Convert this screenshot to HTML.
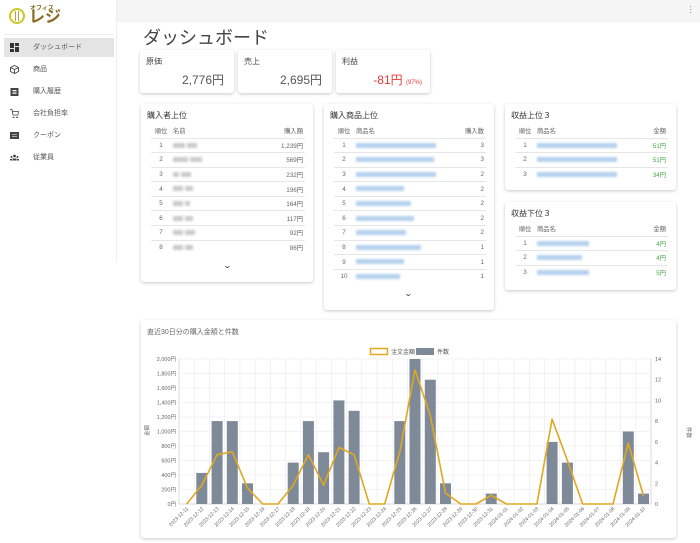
<!DOCTYPE html>
<html><head><meta charset="utf-8"><style>
*{margin:0;padding:0;box-sizing:border-box}
body{width:700px;height:543px;overflow:hidden;background:#fff;font-family:"Liberation Sans","Noto Sans CJK JP",sans-serif;color:#333;position:relative}
.top{position:absolute;left:117px;top:0;width:583px;height:22px;background:#f5f5f5}
.side{position:absolute;left:0;top:0;width:117px;height:262px;border-right:1px solid #eee;background:#fff}
.item{position:absolute;left:4px;width:110px;height:19px;font-size:7px;color:#555;line-height:19px;padding-left:29px}
.item.act{background:#e4e4e4}
.ic{position:absolute;left:6px;top:5px;width:9px;height:9px}
.card{position:absolute;background:#fff;border-radius:3px;box-shadow:0 1px 3px rgba(0,0,0,.22)}
.lab{position:absolute;left:6px;top:6px;font-size:8px;color:#444}
.val{position:absolute;right:10px;top:21px;font-size:12px;color:#555}
h1{position:absolute;left:143px;top:24px;font-size:18px;font-weight:normal;color:#444}
.tt{position:absolute;left:6px;top:6px;font-size:8px;color:#333}
table{position:absolute;border-collapse:collapse;font-size:6.3px;color:#666}
td{height:14.6px;border-top:1px solid #e6e6e6;padding:0 2px}
tr.h td{border-top:none;height:14px;color:#666}
.r{text-align:right}.c{text-align:center}
.blur{display:inline-block;height:5px;background:#ccc;filter:blur(1px);vertical-align:middle}
.bl{display:inline-block;height:5px;background:#b5d2ee;filter:blur(1px);vertical-align:middle}
.g{color:#4aa84a}
.chev{position:absolute;font-size:8px;color:#444;transform:scaleX(1.4)}
</style></head><body>
<div class="top"></div><div style="position:absolute;right:8px;top:5px;font-size:8px;color:#555;line-height:3px">·<br>·<br>·</div>
<div class="side">
 <div style="position:absolute;left:9px;top:8px;width:16px;height:16px;border-radius:50%;border:2px solid #c8c82a"></div>
 <div style="position:absolute;left:15px;top:11px;width:4px;height:10px;border-left:1.5px solid #c8a020;border-right:1.5px solid #c8a020"></div>
 <div style="position:absolute;left:30px;top:3px;font-size:6px;font-weight:bold;color:#8a6a20">オフィス</div>
 <div style="position:absolute;left:29px;top:10px;font-size:16px;font-weight:bold;color:#8a6a20;line-height:16px">レジ</div>
 <div style="position:absolute;left:4px;top:34px;width:110px;border-top:1px solid #eee"></div>
 <div class="item act" style="top:38px"><svg class="ic" viewBox="0 0 9 9"><rect x="0" y="0" width="4" height="5" fill="#333"/><rect x="5" y="0" width="4" height="3" fill="#333"/><rect x="0" y="6" width="4" height="3" fill="#333"/><rect x="5" y="4" width="4" height="5" fill="#333"/></svg>ダッシュボード</div>
 <div class="item" style="top:60px"><svg class="ic" viewBox="0 0 9 9"><path d="M4.5 .5L8.5 2.5V6.5L4.5 8.5L.5 6.5V2.5Z M.5 2.5L4.5 4.5L8.5 2.5 M4.5 4.5V8.5" fill="none" stroke="#444" stroke-width=".9"/></svg>商品</div>
 <div class="item" style="top:82px"><svg class="ic" viewBox="0 0 9 9"><rect x=".5" y="1" width="8" height="8" fill="#444"/><rect x="2.5" y="3" width="4" height="1.3" fill="#fff"/><rect x="2.5" y="5.5" width="4" height="1.3" fill="#fff"/></svg>購入履歴</div>
 <div class="item" style="top:104px"><svg class="ic" viewBox="0 0 9 9"><path d="M0 .5H2L3 6H8L8.5 2.5H2.5 M3.5 8a.6 .6 0 1 0 .1 0M7 8a.6 .6 0 1 0 .1 0" fill="none" stroke="#444" stroke-width=".8"/></svg>会社負担率</div>
 <div class="item" style="top:126px"><svg class="ic" viewBox="0 0 9 9"><rect x="0" y="1" width="9" height="7" fill="#444"/><rect x="2" y="3" width="5" height="1" fill="#aaa"/><rect x="2" y="5" width="5" height="1" fill="#aaa"/></svg>クーポン</div>
 <div class="item" style="top:148px"><svg class="ic" viewBox="0 0 9 9"><circle cx="4.5" cy="3" r="1.4" fill="#444"/><circle cx="1.5" cy="4" r="1" fill="#444"/><circle cx="7.5" cy="4" r="1" fill="#444"/><rect x="2.5" y="5.5" width="4" height="2" fill="#444"/><rect x="0" y="6" width="2" height="1.5" fill="#444"/><rect x="7" y="6" width="2" height="1.5" fill="#444"/></svg>従業員</div>
</div>
<h1>ダッシュボード</h1>
<div class="card" style="left:140px;top:50px;width:94px;height:43px"><div class="lab">原価</div><div class="val">2,776円</div></div>
<div class="card" style="left:238px;top:50px;width:94px;height:43px"><div class="lab">売上</div><div class="val">2,695円</div></div>
<div class="card" style="left:336px;top:50px;width:94px;height:43px"><div class="lab">利益</div><div class="val" style="color:#e53935;right:8px">-81円 <span style="font-size:6px">(97%)</span></div></div>

<div class="card" style="left:141px;top:104px;width:172px;height:178px"><div class="tt">購入者上位</div>
<table style="left:10px;top:20px;width:154px">
<tr class="h"><td class="c" style="width:20px">順位</td><td>名前</td><td class="r">購入額</td></tr>
<tr><td class="c">1</td><td><span class="blur" style="width:12px"></span> <span class="blur" style="width:10px"></span></td><td class="r">1,239円</td></tr>
<tr><td class="c">2</td><td><span class="blur" style="width:15px"></span> <span class="blur" style="width:12px"></span></td><td class="r">569円</td></tr>
<tr><td class="c">3</td><td><span class="blur" style="width:6px"></span> <span class="blur" style="width:10px"></span></td><td class="r">232円</td></tr>
<tr><td class="c">4</td><td><span class="blur" style="width:10px"></span> <span class="blur" style="width:8px"></span></td><td class="r">196円</td></tr>
<tr><td class="c">5</td><td><span class="blur" style="width:10px"></span> <span class="blur" style="width:5px"></span></td><td class="r">164円</td></tr>
<tr><td class="c">6</td><td><span class="blur" style="width:10px"></span> <span class="blur" style="width:8px"></span></td><td class="r">117円</td></tr>
<tr><td class="c">7</td><td><span class="blur" style="width:10px"></span> <span class="blur" style="width:10px"></span></td><td class="r">92円</td></tr>
<tr><td class="c">8</td><td><span class="blur" style="width:10px"></span> <span class="blur" style="width:8px"></span></td><td class="r">86円</td></tr>
</table><div class="chev" style="left:83px;top:157px">⌄</div></div>

<div class="card" style="left:324px;top:104px;width:170px;height:206px"><div class="tt">購入商品上位</div>
<table style="left:10px;top:20px;width:152px">
<tr class="h"><td class="c" style="width:20px">順位</td><td>商品名</td><td class="r">購入数</td></tr>
<tr><td class="c">1</td><td><span class="bl" style="width:80px"></span></td><td class="r">3</td></tr>
<tr><td class="c">2</td><td><span class="bl" style="width:78px"></span></td><td class="r">3</td></tr>
<tr><td class="c">3</td><td><span class="bl" style="width:80px"></span></td><td class="r">2</td></tr>
<tr><td class="c">4</td><td><span class="bl" style="width:48px"></span></td><td class="r">2</td></tr>
<tr><td class="c">5</td><td><span class="bl" style="width:55px"></span></td><td class="r">2</td></tr>
<tr><td class="c">6</td><td><span class="bl" style="width:58px"></span></td><td class="r">2</td></tr>
<tr><td class="c">7</td><td><span class="bl" style="width:50px"></span></td><td class="r">2</td></tr>
<tr><td class="c">8</td><td><span class="bl" style="width:65px"></span></td><td class="r">1</td></tr>
<tr><td class="c">9</td><td><span class="bl" style="width:48px"></span></td><td class="r">1</td></tr>
<tr><td class="c">10</td><td><span class="bl" style="width:44px"></span></td><td class="r">1</td></tr>
</table><div class="chev" style="left:81px;top:185px">⌄</div></div>

<div class="card" style="left:505px;top:104px;width:171px;height:86px"><div class="tt">収益上位３</div>
<table style="left:10px;top:20px;width:153px">
<tr class="h"><td class="c" style="width:20px">順位</td><td>商品名</td><td class="r">金額</td></tr>
<tr><td class="c">1</td><td><span class="bl" style="width:80px"></span></td><td class="r g">51円</td></tr>
<tr><td class="c">2</td><td><span class="bl" style="width:80px"></span></td><td class="r g">51円</td></tr>
<tr><td class="c">3</td><td><span class="bl" style="width:80px"></span></td><td class="r g">34円</td></tr>
</table></div>

<div class="card" style="left:505px;top:202px;width:171px;height:88px"><div class="tt">収益下位３</div>
<table style="left:10px;top:20px;width:153px">
<tr class="h"><td class="c" style="width:20px">順位</td><td>商品名</td><td class="r">金額</td></tr>
<tr><td class="c">1</td><td><span class="bl" style="width:52px"></span></td><td class="r g">4円</td></tr>
<tr><td class="c">2</td><td><span class="bl" style="width:45px"></span></td><td class="r g">4円</td></tr>
<tr><td class="c">3</td><td><span class="bl" style="width:52px"></span></td><td class="r g">5円</td></tr>
</table></div>

<div class="card" style="left:141px;top:320px;width:535px;height:218px"></div>
<svg style="position:absolute;left:0;top:0" width="700" height="543" font-family="Liberation Sans, Noto Sans CJK JP, sans-serif">
<text x="147" y="334" font-size="7" fill="#666">直近30日分の購入金額と件数</text>
<rect x="370.5" y="348.5" width="17" height="6" fill="#fff" stroke="#e0a820" stroke-width="1.5"/><text x="391" y="354" font-size="6" fill="#555">注文金額</text>
<rect x="416" y="348" width="18" height="7" fill="#7f8a99"/><text x="437" y="354" font-size="6" fill="#555">件数</text>
<g stroke="#e8e8e8" stroke-width=".6">
<line x1="179" y1="359" x2="651" y2="359"/><line x1="179" y1="373.5" x2="651" y2="373.5"/><line x1="179" y1="388" x2="651" y2="388"/><line x1="179" y1="402.5" x2="651" y2="402.5"/><line x1="179" y1="417" x2="651" y2="417"/><line x1="179" y1="431.5" x2="651" y2="431.5"/><line x1="179" y1="446" x2="651" y2="446"/><line x1="179" y1="460.5" x2="651" y2="460.5"/><line x1="179" y1="475" x2="651" y2="475"/><line x1="179" y1="489.5" x2="651" y2="489.5"/>
</g>
<g stroke="#eaeaea" stroke-width=".6">
<path d="M194.2 359V504M209.5 359V504M224.7 359V504M239.9 359V504M255.2 359V504M270.4 359V504M285.6 359V504M300.8 359V504M316.1 359V504M331.3 359V504M346.5 359V504M361.8 359V504M377 359V504M392.2 359V504M407.4 359V504M422.7 359V504M437.9 359V504M453.1 359V504M468.4 359V504M483.6 359V504M498.8 359V504M514 359V504M529.3 359V504M544.5 359V504M559.7 359V504M575 359V504M590.2 359V504M605.4 359V504M620.6 359V504M635.9 359V504"/>
</g>
<line x1="179" y1="359" x2="179" y2="504" stroke="#ccc" stroke-width=".7"/><line x1="651" y1="359" x2="651" y2="504" stroke="#ccc" stroke-width=".7"/><line x1="179" y1="504" x2="651" y2="504" stroke="#ccc" stroke-width=".7"/>
<g fill="#7f8a99">
<rect x="196.3" y="472.9" width="11" height="31.1"/><rect x="211.6" y="421.1" width="11" height="82.9"/><rect x="226.8" y="421.1" width="11" height="82.9"/><rect x="242" y="483.3" width="11" height="20.7"/><rect x="287.7" y="462.6" width="11" height="41.4"/><rect x="302.9" y="421.1" width="11" height="82.9"/><rect x="318.1" y="452.2" width="11" height="51.8"/><rect x="333.4" y="400.4" width="11" height="103.6"/><rect x="348.6" y="410.8" width="11" height="93.2"/><rect x="394.3" y="421.1" width="11" height="82.9"/><rect x="409.5" y="359" width="11" height="145"/><rect x="424.8" y="379.7" width="11" height="124.3"/><rect x="440" y="483.3" width="11" height="20.7"/><rect x="485.7" y="493.6" width="11" height="10.4"/><rect x="546.6" y="441.9" width="11" height="62.1"/><rect x="561.9" y="462.6" width="11" height="41.4"/><rect x="622.8" y="431.5" width="11" height="72.5"/><rect x="638" y="493.6" width="11" height="10.4"/>
</g>
<polyline fill="none" stroke="#e0a820" stroke-width="1.6" stroke-linejoin="round" points="186.6,504 201.8,485.2 217.1,454.7 232.3,451.8 247.5,488.1 262.8,504 278,504 293.2,485.2 308.4,454.7 323.6,485.2 338.9,447.5 354.1,454.7 369.3,504 384.6,504 399.8,451.8 415,369.9 430.3,415.5 445.5,493.1 460.7,504 476,504 491.2,495.3 506.4,504 521.7,504 536.9,504 552.1,419.2 567.4,460.5 582.6,504 597.8,504 613,504 628.3,443.1 643.5,496"/>
<g font-size="5.5" fill="#666" text-anchor="end">
<text x="176" y="361">2,000円</text><text x="176" y="375.5">1,800円</text><text x="176" y="390">1,600円</text><text x="176" y="404.5">1,400円</text><text x="176" y="419">1,200円</text><text x="176" y="433.5">1,000円</text><text x="176" y="448">800円</text><text x="176" y="462.5">600円</text><text x="176" y="477">400円</text><text x="176" y="491.5">200円</text><text x="176" y="506">0円</text>
</g>
<g font-size="5.5" fill="#666">
<text x="655" y="361">14</text><text x="655" y="381.7">12</text><text x="655" y="402.4">10</text><text x="655" y="423.1">8</text><text x="655" y="443.9">6</text><text x="655" y="464.6">4</text><text x="655" y="485.3">2</text><text x="655" y="506">0</text>
</g>
<text font-size="5.5" fill="#666" transform="translate(149,436) rotate(-90)">金額</text>
<text font-size="5.5" fill="#666" transform="translate(687,427) rotate(90)">件数</text>
<g font-size="5" fill="#666" text-anchor="end">
<text transform="translate(188.6,509) rotate(-45)">2023-12-11</text><text transform="translate(203.8,509) rotate(-45)">2023-12-12</text><text transform="translate(219.1,509) rotate(-45)">2023-12-13</text><text transform="translate(234.3,509) rotate(-45)">2023-12-14</text><text transform="translate(249.5,509) rotate(-45)">2023-12-15</text><text transform="translate(264.8,509) rotate(-45)">2023-12-16</text><text transform="translate(280,509) rotate(-45)">2023-12-17</text><text transform="translate(295.2,509) rotate(-45)">2023-12-18</text><text transform="translate(310.4,509) rotate(-45)">2023-12-19</text><text transform="translate(325.6,509) rotate(-45)">2023-12-20</text><text transform="translate(340.9,509) rotate(-45)">2023-12-21</text><text transform="translate(356.1,509) rotate(-45)">2023-12-22</text><text transform="translate(371.3,509) rotate(-45)">2023-12-23</text><text transform="translate(386.6,509) rotate(-45)">2023-12-24</text><text transform="translate(401.8,509) rotate(-45)">2023-12-25</text><text transform="translate(417,509) rotate(-45)">2023-12-26</text><text transform="translate(432.3,509) rotate(-45)">2023-12-27</text><text transform="translate(447.5,509) rotate(-45)">2023-12-28</text><text transform="translate(462.7,509) rotate(-45)">2023-12-29</text><text transform="translate(478,509) rotate(-45)">2023-12-30</text><text transform="translate(493.2,509) rotate(-45)">2023-12-31</text><text transform="translate(508.4,509) rotate(-45)">2024-01-01</text><text transform="translate(523.7,509) rotate(-45)">2024-01-02</text><text transform="translate(538.9,509) rotate(-45)">2024-01-03</text><text transform="translate(554.1,509) rotate(-45)">2024-01-04</text><text transform="translate(569.4,509) rotate(-45)">2024-01-05</text><text transform="translate(584.6,509) rotate(-45)">2024-01-06</text><text transform="translate(599.8,509) rotate(-45)">2024-01-07</text><text transform="translate(615,509) rotate(-45)">2024-01-08</text><text transform="translate(630.3,509) rotate(-45)">2024-01-09</text><text transform="translate(645.5,509) rotate(-45)">2024-01-10</text>
</g>
</svg>
</body></html>
